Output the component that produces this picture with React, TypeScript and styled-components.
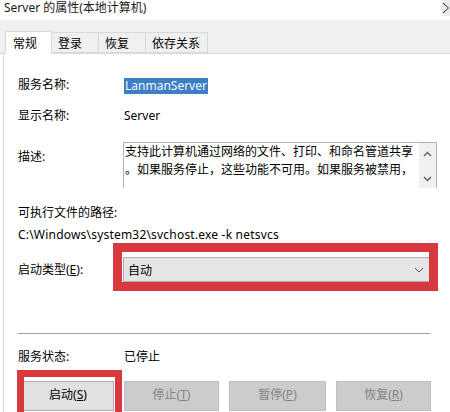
import React from "react";
import styled, { createGlobalStyle } from "styled-components";

const Global = createGlobalStyle`
  html, body { margin: 0; padding: 0; background: #ffffff; }
  body { font-family: "Noto Sans", "Noto Sans CJK SC", sans-serif; font-size: 12px; color: #000; }
`;

const Window = styled.div`
  width: 450px;
  height: 412px;
  overflow: hidden;
  background: #ffffff;
  display: flex;
  flex-direction: column;
  font-family: "Noto Sans", "Noto Sans CJK SC", sans-serif;
`;

const TitleBar = styled.div`
  height: 20px;
  display: flex;
  align-items: center;
  justify-content: space-between;
  padding-left: 4px;
  font-size: 12px;
  line-height: 14px;
  color: #1a1a1a;
  overflow: hidden;
`;

const TitleText = styled.span`
  margin-top: -4px;
`;

const CloseBox = styled.div`
  width: 8px;
  height: 16px;
  margin-top: -4px;
  background: #ececec;
  display: flex;
  align-items: center;
  overflow: hidden;
`;

const TabStrip = styled.div`
  height: 34px;
  background: #f0f0f0;
  display: flex;
  align-items: flex-end;
  padding-left: 5px;
  border-bottom: 1px solid #dadada;
  box-sizing: border-box;
`;

const Tab = styled.div<{ $active?: boolean }>`
  box-sizing: border-box;
  min-width: 47px;
  height: ${(p) => (p.$active ? "23px" : "21px")};
  padding: 0 7px 0 ${(p) => (p.$active ? "7px" : "6px")};
  margin-bottom: ${(p) => (p.$active ? "-1px" : "0")};
  background: ${(p) => (p.$active ? "#ffffff" : "#f0f0f0")};
  border: 1px solid #d9d9d9;
  border-bottom: ${(p) => (p.$active ? "none" : "1px solid #d9d9d9")};
  border-left: ${(p) => (p.$active ? "1px solid #d9d9d9" : "none")};
  display: flex;
  align-items: center;
  font-size: 12px;
  color: #000;
  position: relative;
  z-index: ${(p) => (p.$active ? 1 : 0)};
`;

const Panel = styled.div`
  flex: 1;
  margin-left: 3px;
  border-left: 1px solid #dcdcdc;
  padding-left: 14px;
  display: flex;
  flex-direction: column;
`;

const Row = styled.div<{ $mt: number; $h?: number; $top?: boolean }>`
  display: grid;
  grid-template-columns: 106px 1fr;
  justify-items: start;
  align-items: ${(p) => (p.$top ? "start" : "center")};
  margin-top: ${(p) => p.$mt}px;
  min-height: ${(p) => p.$h ?? 20}px;
`;

const Label = styled.div<{ $pt?: number }>`
  font-size: 12px;
  line-height: 18px;
  padding-top: ${(p) => p.$pt ?? 0}px;
  white-space: nowrap;
`;

const Plain = styled.div<{ $mt?: number; $ls?: number }>`
  font-size: 12px;
  line-height: 20px;
  margin-top: ${(p) => p.$mt ?? 0}px;
  letter-spacing: ${(p) => p.$ls ?? 0}px;
  white-space: nowrap;
`;

const Selected = styled.span`
  display: inline-block;
  background: #3d7fc4;
  color: #f4f8fc;
  line-height: 16px;
  padding: 0 1px;
`;

const DescBox = styled.div`
  margin-left: -1px;
  width: 314px;
  height: 46px;
  box-sizing: border-box;
  border: 1px solid #b4b4b4;
  border-bottom: none;
  display: flex;
  overflow: hidden;
`;

const DescText = styled.div`
  flex: 1;
  padding-left: 1px;
  font-size: 12px;
  line-height: 18px;
  white-space: nowrap;
  overflow: hidden;
`;

const ScrollBar = styled.div`
  width: 17px;
  background: #f0f0f0;
  display: flex;
  flex-direction: column;
  align-items: center;
  justify-content: space-between;
  padding: 8px 0 6px;
  box-sizing: border-box;
`;

const Arrow = ({ up }: { up?: boolean }) => (
  <svg width="9" height="6" viewBox="0 0 9 6">
    <path
      d={up ? "M1 5 L4.5 1.5 L8 5" : "M1 1 L4.5 4.5 L8 1"}
      stroke="#606060"
      strokeWidth="1.4"
      fill="none"
    />
  </svg>
);

const Annotated = styled.div<{ $t: number; $l: number; $r: number; $b: number; $w: number }>`
  position: relative;
  width: fit-content;
  &::after {
    content: "";
    position: absolute;
    top: ${(p) => p.$t}px;
    left: ${(p) => p.$l}px;
    right: ${(p) => p.$r}px;
    bottom: ${(p) => p.$b}px;
    border: ${(p) => p.$w}px solid #d8393e;
    pointer-events: none;
  }
`;

const Dropdown = styled.div`
  margin-left: -1px;
  width: 308px;
  height: 25px;
  box-sizing: border-box;
  background: #e5e5e5;
  border: 1px solid #adadad;
  display: flex;
  align-items: center;
  justify-content: space-between;
  padding: 0 6px 0 4px;
  font-size: 12px;
`;

const Separator = styled.div`
  margin-top: 51px;
  width: 412px;
  height: 1px;
  background: #a0a0a0;
`;

const ButtonRow = styled.div`
  margin-top: 14px;
  padding-left: 4px;
  display: flex;
  gap: 10px;
`;

const Button = styled.div<{ $w: number; $disabled?: boolean }>`
  width: ${(p) => p.$w}px;
  height: 30px;
  box-sizing: border-box;
  background: ${(p) => (p.$disabled ? "#cccccc" : "#e1e1e1")};
  border: 1px solid ${(p) => (p.$disabled ? "#bfbfbf" : "#adadad")};
  color: ${(p) => (p.$disabled ? "#838383" : "#000")};
  display: flex;
  justify-content: center;
  padding-top: 5px;
  font-size: 12px;
  line-height: 16px;
`;

const U = styled.span`
  text-decoration: underline;
`;

export default function App() {
  return (
    <>
      <Global />
      <Window>
        <TitleBar>
          <TitleText>Server 的属性(本地计算机)</TitleText>
          <CloseBox>
            <svg width="8" height="12" viewBox="0 0 8 12">
              <path d="M1 1 L6.5 6 L1 11" stroke="#222" strokeWidth="1" fill="none" />
            </svg>
          </CloseBox>
        </TitleBar>
        <TabStrip>
          <Tab $active>常规</Tab>
          <Tab>登录</Tab>
          <Tab>恢复</Tab>
          <Tab>依存关系</Tab>
        </TabStrip>
        <Panel>
          <Row $mt={21}>
            <Label>服务名称:</Label>
            <div>
              <Selected>LanmanServer</Selected>
            </div>
          </Row>
          <Row $mt={11}>
            <Label>显示名称:</Label>
            <Plain>Server</Plain>
          </Row>
          <Row $mt={16} $h={46} $top>
            <Label $pt={6}>描述:</Label>
            <DescBox>
              <DescText>
                <div>支持此计算机通过网络的文件、打印、和命名管道共享</div>
                <div>。如果服务停止，这些功能不可用。如果服务被禁用，</div>
              </DescText>
              <ScrollBar>
                <Arrow up />
                <Arrow />
              </ScrollBar>
            </DescBox>
          </Row>
          <Plain $mt={15}>可执行文件的路径:</Plain>
          <Plain $mt={2} $ls={0.2}>C:\Windows\system32\svchost.exe -k netsvcs</Plain>
          <Row $mt={12} $h={25}>
            <Label>
              启动类型(<U>E</U>):
            </Label>
            <Annotated $t={-14} $l={-11} $r={-7} $b={-9} $w={9}>
              <Dropdown>
                <span>自动</span>
                <svg width="10" height="6" viewBox="0 0 10 6">
                  <path d="M1 1 L5 5 L9 1" stroke="#555" strokeWidth="1" fill="none" />
                </svg>
              </Dropdown>
            </Annotated>
          </Row>
          <Separator />
          <Row $mt={13}>
            <Label>服务状态:</Label>
            <Plain>已停止</Plain>
          </Row>
          <ButtonRow>
            <Annotated $t={-11} $l={-5} $r={-8} $b={-20} $w={7}>
              <Button $w={92}>
                启动(<U>S</U>)
              </Button>
            </Annotated>
            <Button $w={95} $disabled>
              停止(<U>T</U>)
            </Button>
            <Button $w={97} $disabled>
              暂停(<U>P</U>)
            </Button>
            <Button $w={95} $disabled>
              恢复(<U>R</U>)
            </Button>
          </ButtonRow>
        </Panel>
      </Window>
    </>
  );
}
